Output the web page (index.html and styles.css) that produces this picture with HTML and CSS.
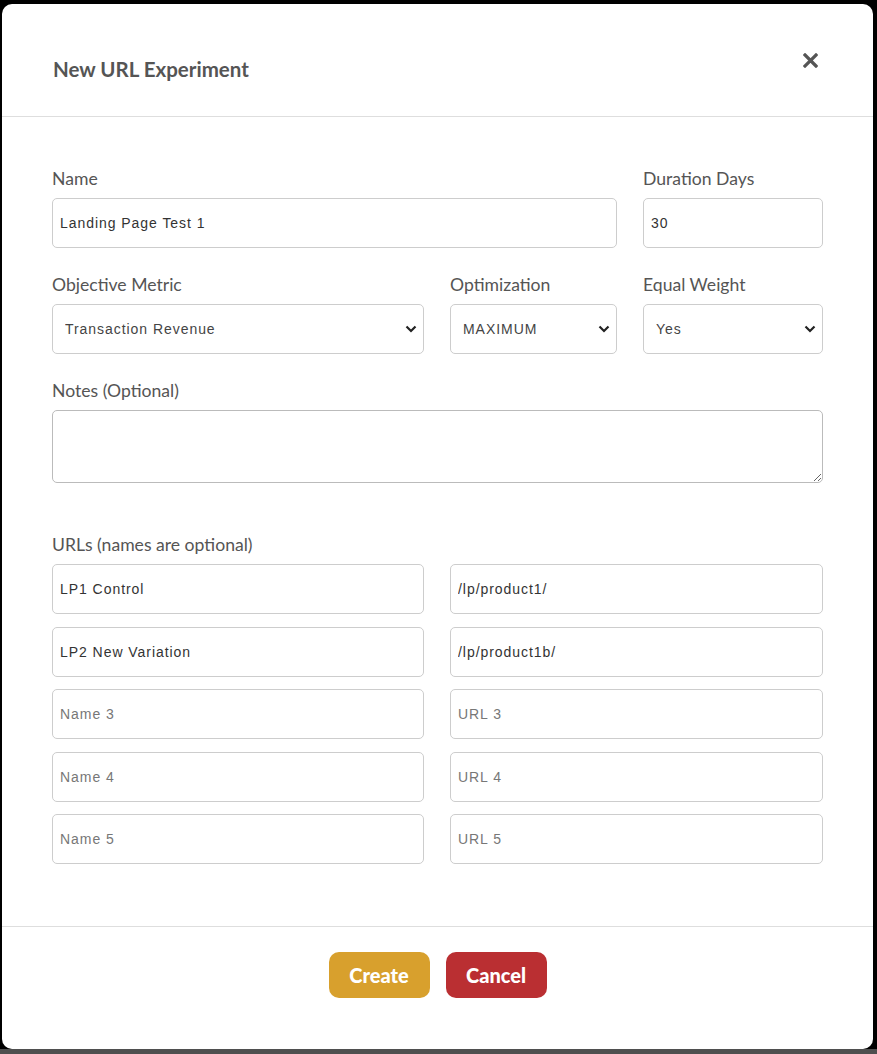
FILE: index.html
```html
<!DOCTYPE html>
<html lang="en">

<head>
    <meta charset="UTF-8">
    <meta name="viewport" content="width=device-width, initial-scale=1.0">
    <title>New URL Experiment</title>
    <link rel="stylesheet" href="styles.css">
</head>

<body>
    <div class="modal">
        <div class="modal-header">
            <h2>New URL Experiment</h2>
            <button class="close" type="button" aria-label="Close">
                <svg width="15" height="15" viewBox="0 0 15 15">
                    <path d="M2 2 L13 13 M13 2 L2 13" stroke="#555" stroke-width="3.2" stroke-linecap="square" />
                </svg>
            </button>
        </div>

        <form class="modal-body" id="experimentForm">
            <div class="grid">
                <div class="field span-2">
                    <label for="name">Name</label>
                    <input type="text" id="name" value="Landing Page Test 1">
                </div>
                <div class="field">
                    <label for="days">Duration Days</label>
                    <input type="text" id="days" value="30">
                </div>

                <div class="field">
                    <label for="metric">Objective Metric</label>
                    <select id="metric">
                        <option>Transaction Revenue</option>
                    </select>
                </div>
                <div class="field">
                    <label for="optim">Optimization</label>
                    <select id="optim">
                        <option>MAXIMUM</option>
                    </select>
                </div>
                <div class="field">
                    <label for="weight">Equal Weight</label>
                    <select id="weight">
                        <option>Yes</option>
                    </select>
                </div>

                <div class="field span-3">
                    <label for="notes">Notes (Optional)</label>
                    <textarea id="notes"></textarea>
                </div>
            </div>

            <div class="urls">
                <label>URLs (names are optional)</label>
                <div class="url-grid">
                    <input type="text" value="LP1 Control">
                    <input type="text" value="/lp/product1/">
                    <input type="text" value="LP2 New Variation">
                    <input type="text" value="/lp/product1b/">
                    <input type="text" placeholder="Name 3">
                    <input type="text" placeholder="URL 3">
                    <input type="text" placeholder="Name 4">
                    <input type="text" placeholder="URL 4">
                    <input type="text" placeholder="Name 5">
                    <input type="text" placeholder="URL 5">
                </div>
            </div>
        </form>

        <div class="modal-footer">
            <button class="btn create" type="button">Create</button>
            <button class="btn cancel" type="button">Cancel</button>
        </div>
    </div>
</body>

</html>
```

FILE: styles.css
```css
html {
    background: linear-gradient(to bottom, #000 1049px, #4f4f4f 1049px);
    min-height: 100%;
}

body {
    font-family: Lato, "Open Sans", sans-serif;
    margin: 0;
    padding: 4px 4px 0 2px;
}

.modal {
    background-color: #fff;
    width: 871px;
    height: 1045px;
    border-radius: 10px;
    box-sizing: border-box;
    display: flex;
    flex-direction: column;
}

.modal-header {
    height: 113px;
    flex-shrink: 0;
    box-sizing: border-box;
    border-bottom: 1px solid #dedede;
    display: flex;
    align-items: flex-start;
    justify-content: space-between;
    padding: 53px 55px 0 51px;
}

.modal-header h2 {
    margin: 0;
    font-size: 20.5px;
    line-height: 24px;
    font-weight: 700;
    color: #555;
}

.close {
    background: none;
    border: none;
    padding: 0;
    margin-top: -4px;
    cursor: pointer;
    display: flex;
}

.modal-body {
    padding: 51px 50px 62px 50px;
}

.grid {
    display: grid;
    grid-template-columns: 372px 167px 180px;
    column-gap: 26px;
    row-gap: 26px;
}

.span-2 {
    grid-column: span 2;
}

.span-3 {
    grid-column: span 3;
}

label {
    display: block;
    color: #555;
    font-size: 17.6px;
    line-height: 22px;
    margin-bottom: 8px;
}

input[type="text"],
select,
textarea {
    display: block;
    width: 100%;
    height: 50px;
    box-sizing: border-box;
    border: 1px solid #cdcdcd;
    border-radius: 5px;
    background-color: #fff;
    font-family: "Liberation Sans", Arial, sans-serif;
    font-size: 14px;
    letter-spacing: 0.95px;
    color: #333;
    padding: 0 7px;
    margin: 0;
}

input::placeholder {
    color: #777;
}

select {
    appearance: none;
    padding: 0 12px;
    color: #444;
    background-image: url("data:image/svg+xml;utf8,<svg xmlns='http://www.w3.org/2000/svg' width='12' height='8' viewBox='0 0 12 8'><path d='M1.5 1.5 L6 6 L10.5 1.5' fill='none' stroke='%23222' stroke-width='2.2'/></svg>");
    background-repeat: no-repeat;
    background-position: right 6px center;
}

textarea {
    height: 73px;
    resize: vertical;
    border-color: #bbb;
}

.urls {
    margin-top: 51px;
}

.url-grid {
    display: grid;
    grid-template-columns: 372px 373px;
    column-gap: 26px;
    row-gap: 12.5px;
}

.modal-footer {
    border-top: 1px solid #dedede;
    display: flex;
    justify-content: center;
    gap: 16px;
    padding-top: 25px;
}

.btn {
    font-family: Lato, sans-serif;
    font-weight: 900;
    font-size: 20px;
    color: #fff;
    border: none;
    border-radius: 10px;
    height: 46px;
    width: 101px;
    padding: 0;
    cursor: pointer;
}

.create {
    background-color: #d8a02d;
}

.cancel {
    background-color: #ba2f32;
}
```
